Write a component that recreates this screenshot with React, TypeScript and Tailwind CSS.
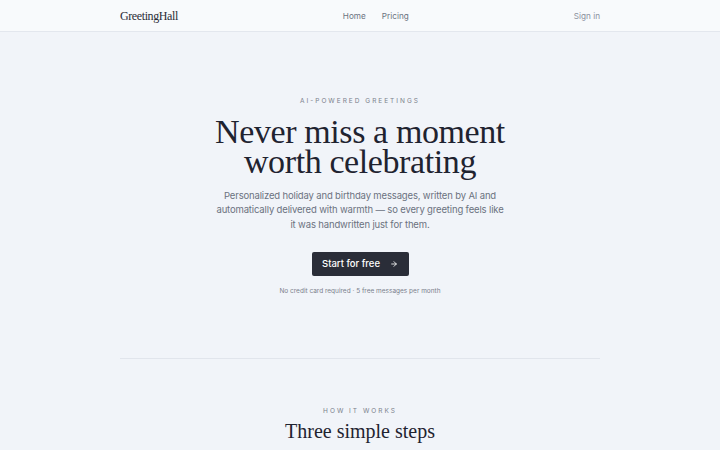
import React from "react";

const serif = { fontFamily: '"Liberation Serif", "DejaVu Serif", serif' };

export default function App() {
  return (
    <div className="min-h-[450px] bg-[#f1f4f9] text-[#1f2330]" style={{ fontFamily: 'Inter, "Noto Sans", sans-serif' }}>
      <header className="h-[32px] border-b border-[#e3e7ee] bg-[#f8fafc]">
        <div className="mx-auto flex h-full w-[480px] items-center justify-between pt-[1px]">
          <div className="text-[12px] tracking-[-0.4px] text-[#2a2d37]" style={serif}>GreetingHall</div>
          <nav className="flex items-center gap-[16px] text-[8.2px] text-[#6b7280]">
            <span>Home</span>
            <span>Pricing</span>
          </nav>
          <div className="text-[8.2px] text-[#8a909c]">Sign in</div>
        </div>
      </header>

      <section className="flex flex-col items-center pt-[65px]">
        <div className="text-[6.5px] tracking-[2px] text-[#7b818c]">AI-POWERED GREETINGS</div>
        <h1 className="mt-[10px] text-center text-[34px] leading-[30px] tracking-[-0.4px] text-[#1f2330]" style={serif}>
          Never miss a moment
          <br />
          worth celebrating
        </h1>
        <p className="mt-[12px] w-[292px] text-center text-[9.5px] leading-[14.5px] tracking-[-0.15px] text-[#6b7280]">
          Personalized holiday and birthday messages, written by AI and automatically delivered with warmth — so every greeting feels like it was handwritten just for them.
        </p>
        <button className="mt-[20px] flex h-[24px] w-[97px] items-center justify-center gap-[10px] rounded-[2px] bg-[#2a2d38] text-[9.5px] font-medium text-white">
          <span>Start for free</span>
          <svg width="8" height="8" viewBox="0 0 24 24" fill="none" stroke="currentColor" strokeWidth="2.5" strokeLinecap="round" strokeLinejoin="round">
            <path d="M5 12h14" />
            <path d="m12 5 7 7-7 7" />
          </svg>
        </button>
        <div className="mt-[11px] text-[6.5px] text-[#7b818c]">No credit card required · 5 free messages per month</div>
      </section>

      <div className="mx-auto mt-[61px] h-px w-[480px] bg-[#e1e5ec]" />

      <section className="flex flex-col items-center pt-[48px]">
        <div className="text-[6.5px] tracking-[2px] text-[#7b818c]">HOW IT WORKS</div>
        <h2 className="mt-[2px] text-[20px] leading-[24px] text-[#1f2330]" style={serif}>Three simple steps</h2>
      </section>
    </div>
  );
}
